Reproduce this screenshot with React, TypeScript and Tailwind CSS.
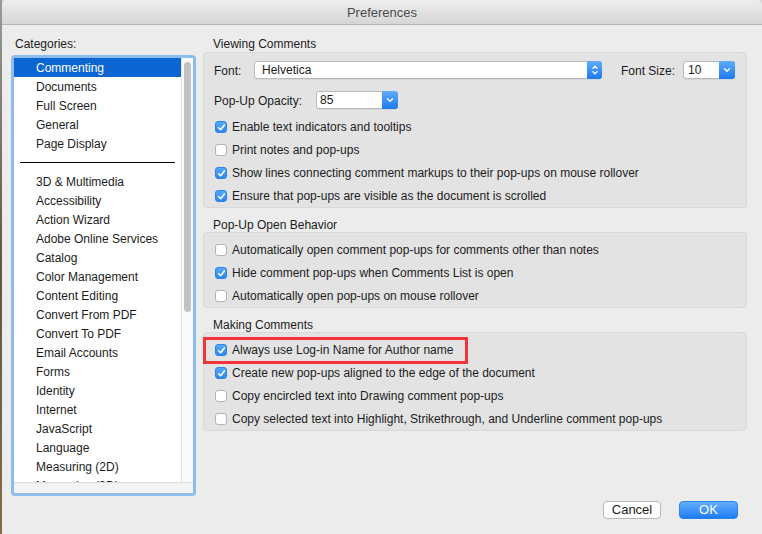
import React from "react";

const Check = ({ checked }: { checked: boolean }) =>
  checked ? (
    <span className="ml-[1px] flex h-[12px] w-[12px] shrink-0 items-center justify-center rounded-[3px] bg-gradient-to-b from-[#55a8fd] to-[#2a86f4] border border-[#2d84e8]">
      <svg width="9" height="9" viewBox="0 0 9 9">
        <path d="M1.6 4.8 L3.6 6.8 L7.4 2" stroke="white" strokeWidth="1.6" fill="none" strokeLinecap="round" strokeLinejoin="round" />
      </svg>
    </span>
  ) : (
    <span className="ml-[1px] h-[12px] w-[12px] shrink-0 rounded-[3px] border border-[#b4b4b4] bg-white" />
  );

const Row = ({ checked, label }: { checked: boolean; label: string }) => (
  <div className="flex h-[23px] items-center gap-[5px] pt-[1px]">
    <Check checked={checked} />
    <span>{label}</span>
  </div>
);

const Chevron = () => (
  <svg width="8" height="6" viewBox="0 0 8 6">
    <path d="M1.5 1.8 L4 4.2 L6.5 1.8" stroke="white" strokeWidth="1.4" fill="none" strokeLinecap="round" strokeLinejoin="round" />
  </svg>
);

const Stepper = () => (
  <svg width="8" height="12" viewBox="0 0 8 12">
    <path d="M1.8 4.4 L4 2.2 L6.2 4.4" stroke="white" strokeWidth="1.3" fill="none" strokeLinecap="round" strokeLinejoin="round" />
    <path d="M1.8 7.6 L4 9.8 L6.2 7.6" stroke="white" strokeWidth="1.3" fill="none" strokeLinecap="round" strokeLinejoin="round" />
  </svg>
);

const Select = ({ value, width, pad, stepper }: { value: string; width: string; pad: string; stepper?: boolean }) => (
  <div className={`flex h-[18px] ${width} rounded-[3px] border border-[#b9b9b9] bg-white shadow-[0_1px_0_rgba(0,0,0,0.05)]`}>
    <span className={`flex-1 ${pad} pt-[1px] leading-[15px]`}>{value}</span>
    <span className={`-my-[1px] -mr-[1px] flex ${stepper ? "w-[15px]" : "w-[16px]"} items-center justify-center rounded-r-[3px] bg-gradient-to-b from-[#5eacfd] to-[#1b79f0]`}>
      {stepper ? <Stepper /> : <Chevron />}
    </span>
  </div>
);

const topItems = ["Commenting", "Documents", "Full Screen", "General", "Page Display"];
const bottomItems = [
  "3D & Multimedia",
  "Accessibility",
  "Action Wizard",
  "Adobe Online Services",
  "Catalog",
  "Color Management",
  "Content Editing",
  "Convert From PDF",
  "Convert To PDF",
  "Email Accounts",
  "Forms",
  "Identity",
  "Internet",
  "JavaScript",
  "Language",
  "Measuring (2D)",
  "Measuring (3D)",
];

export default function App() {
  return (
    <div className="flex h-[534px] w-[762px] overflow-hidden bg-[#d8d8d8] font-['Liberation_Sans',Arial,sans-serif] text-[12px] text-[#1c1c1c]">
      <div className="w-[2px] shrink-0 bg-gradient-to-b from-[#9a9a9a] via-[#5a5a42] to-[#8a6a4a]" />
      <div className="flex flex-1 flex-col rounded-t-[5px] bg-[#ececec]">
        <div className="flex h-[25px] shrink-0 items-center justify-center rounded-t-[5px] border-b border-[#b3b3b3] bg-gradient-to-b from-[#eeeeee] to-[#d6d6d6] pt-[1px] text-[13px] text-[#4b4b4b]">
          Preferences
        </div>
        <div className="flex">
          {/* left column */}
          <div className="ml-[9px] flex w-[185px] flex-col">
            <div className="mt-[11px] h-[16px] pl-[4px] pt-[1px] leading-[15px]">Categories:</div>
            <div className="mt-[3px] flex h-[441px] flex-col rounded-[4px] border-[3px] border-[#8ebcec] bg-[#f2f2f2]">
              <div className="flex h-[424px]">
                <div className="w-[167px] overflow-hidden bg-white">
                  {topItems.map((t, i) => (
                    <div
                      key={t}
                      className={`h-[19px] pl-[22px] pt-[1px] leading-[18px] ${i === 0 ? "bg-[#0b66d2] text-white" : ""}`}
                    >
                      {t}
                    </div>
                  ))}
                  <div className="flex h-[19px] items-center px-[6px]">
                    <div className="h-[1px] w-full bg-black" />
                  </div>
                  {bottomItems.map((t) => (
                    <div key={t} className="h-[19px] pl-[22px] pt-[1px] leading-[18px]">
                      {t}
                    </div>
                  ))}
                </div>
                <div className="flex-1 border-l border-[#e4e4e4] bg-[#fafafa] pl-[2px] pt-[4px]">
                  <div className="h-[250px] w-[7px] rounded-full bg-[#c2c2c2]" />
                </div>
              </div>
              <div className="flex-1 border-t border-[#dedede] bg-[#f3f3f3]" />
            </div>
          </div>

          {/* right column */}
          <div className="ml-[7px] flex w-[544px] flex-col">
            <div className="mt-[11px] h-[16px] pl-[10px] pt-[1px] leading-[15px]">Viewing Comments</div>
            <div className="rounded-[4px] border border-[#d9d9d9] bg-[#e3e3e3] pl-[10px] pt-[8px]">
              <div className="flex h-[18px] items-center">
                <span className="w-[40px] pt-[1px]">Font:</span>
                <Select value="Helvetica" width="w-[348px]" pad="pl-[7px]" stepper />
                <span className="ml-[19px] w-[62px] pt-[1px]">Font Size:</span>
                <Select value="10" width="w-[52px]" pad="pl-[4px]" />
              </div>
              <div className="mt-[12px] flex h-[18px] items-center">
                <span className="w-[102px] pt-[1px]">Pop-Up Opacity:</span>
                <Select value="85" width="w-[82px]" pad="pl-[3px]" />
              </div>
              <div className="mt-[6px]">
                <Row checked label="Enable text indicators and tooltips" />
                <Row checked={false} label="Print notes and pop-ups" />
                <Row checked label="Show lines connecting comment markups to their pop-ups on mouse rollover" />
                <Row checked label="Ensure that pop-ups are visible as the document is scrolled" />
              </div>
            </div>

            <div className="mt-[9px] h-[15px] pl-[10px] pt-[1px] leading-[14px]">Pop-Up Open Behavior</div>
            <div className="rounded-[4px] border border-[#d9d9d9] bg-[#e3e3e3] pl-[10px] pt-[5px]">
              <Row checked={false} label="Automatically open comment pop-ups for comments other than notes" />
              <Row checked label="Hide comment pop-ups when Comments List is open" />
              <Row checked={false} label="Automatically open pop-ups on mouse rollover" />
            </div>

            <div className="mt-[9px] h-[15px] pl-[10px] pt-[1px] leading-[14px]">Making Comments</div>
            <div className="relative rounded-[4px] border border-[#d9d9d9] bg-[#e3e3e3] pl-[10px] pt-[5px]">
              <Row checked label="Always use Log-in Name for Author name" />
              <Row checked label="Create new pop-ups aligned to the edge of the document" />
              <Row checked={false} label="Copy encircled text into Drawing comment pop-ups" />
              <Row checked={false} label="Copy selected text into Highlight, Strikethrough, and Underline comment pop-ups" />
              <div className="absolute left-[-1px] top-[4px] h-[27px] w-[265px] border-[3px] border-[#f3343a]" />
            </div>
          </div>
        </div>

        <div className="mt-[5px] flex justify-end gap-[18px] pr-[24px] text-[13px]">
          <button className="h-[18px] w-[58px] rounded-[4px] border border-[#b7b7b7] bg-white leading-[16px] text-[#1c1c1c]">
            Cancel
          </button>
          <button className="h-[18px] w-[59px] rounded-[4px] border border-[#2a82ea] bg-gradient-to-b from-[#63aefd] to-[#1a7cf3] leading-[16px] text-white">
            OK
          </button>
        </div>
      </div>
    </div>
  );
}
